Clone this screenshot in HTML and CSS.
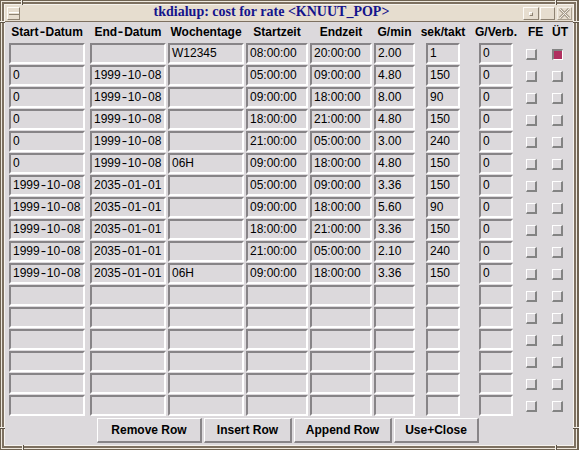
FILE: index.html
```html
<!DOCTYPE html>
<html>
<head>
<meta charset="utf-8">
<title>tkdialup</title>
<link rel="stylesheet" href="styles.css">
</head>
<body>
<div class="window">
  <div class="frame">
    <div class="inner">
      <div class="titlebar">
        <div class="tbtn menu"><span class="bar"></span></div>
        <div class="title">tkdialup: cost for rate &lt;KNUUT_POP&gt;</div>
        <div class="tbtn iconify"><span class="dot"></span></div>
        <div class="tbtn maximize"></div>
        <div class="tbtn close"><svg width="13" height="11" viewBox="0 0 13 11"><path d="M2 1 L11 10 M11 1 L2 10" stroke="#a89e8e" stroke-width="3" fill="none"/><path d="M2 1 L11 10 M11 1 L2 10" stroke="#f3efe8" stroke-width="1" fill="none"/></svg></div>
      </div>
      <div class="content">
        <div class="grid">
          <div class="h w76"><span>Start<span class="hy">-</span>Datum</span></div>
          <div class="h w76"><span>End<span class="hy">-</span>Datum</span></div>
          <div class="h w76"><span>Wochentage</span></div>
          <div class="h w62"><span>Startzeit</span></div>
          <div class="h w62"><span>Endzeit</span></div>
          <div class="h w41"><span>G/min</span></div>
          <div class="h w34"><span>sek/takt</span></div>
          <div class="h w34"><span>G/Verb.</span></div>
          <div class="h fe"><span>FE</span></div>
          <div class="h ut"><span>ÜT</span></div>

          <div class="e w76"></div><div class="e w76"></div><div class="e w76">W12345</div><div class="e w62">08:00:00</div><div class="e w62">20:00:00</div><div class="e w41">2.00</div><div class="e w34">1</div><div class="e w34">0</div><div class="cb"></div><div class="cb on"></div>

          <div class="e w76">0</div><div class="e w76">1999<span class="hy">-</span>10<span class="hy">-</span>08</div><div class="e w76"></div><div class="e w62">05:00:00</div><div class="e w62">09:00:00</div><div class="e w41">4.80</div><div class="e w34">150</div><div class="e w34">0</div><div class="cb"></div><div class="cb"></div>

          <div class="e w76">0</div><div class="e w76">1999<span class="hy">-</span>10<span class="hy">-</span>08</div><div class="e w76"></div><div class="e w62">09:00:00</div><div class="e w62">18:00:00</div><div class="e w41">8.00</div><div class="e w34">90</div><div class="e w34">0</div><div class="cb"></div><div class="cb"></div>

          <div class="e w76">0</div><div class="e w76">1999<span class="hy">-</span>10<span class="hy">-</span>08</div><div class="e w76"></div><div class="e w62">18:00:00</div><div class="e w62">21:00:00</div><div class="e w41">4.80</div><div class="e w34">150</div><div class="e w34">0</div><div class="cb"></div><div class="cb"></div>

          <div class="e w76">0</div><div class="e w76">1999<span class="hy">-</span>10<span class="hy">-</span>08</div><div class="e w76"></div><div class="e w62">21:00:00</div><div class="e w62">05:00:00</div><div class="e w41">3.00</div><div class="e w34">240</div><div class="e w34">0</div><div class="cb"></div><div class="cb"></div>

          <div class="e w76">0</div><div class="e w76">1999<span class="hy">-</span>10<span class="hy">-</span>08</div><div class="e w76">06H</div><div class="e w62">09:00:00</div><div class="e w62">18:00:00</div><div class="e w41">4.80</div><div class="e w34">150</div><div class="e w34">0</div><div class="cb"></div><div class="cb"></div>

          <div class="e w76">1999<span class="hy">-</span>10<span class="hy">-</span>08</div><div class="e w76">2035<span class="hy">-</span>01<span class="hy">-</span>01</div><div class="e w76"></div><div class="e w62">05:00:00</div><div class="e w62">09:00:00</div><div class="e w41">3.36</div><div class="e w34">150</div><div class="e w34">0</div><div class="cb"></div><div class="cb"></div>

          <div class="e w76">1999<span class="hy">-</span>10<span class="hy">-</span>08</div><div class="e w76">2035<span class="hy">-</span>01<span class="hy">-</span>01</div><div class="e w76"></div><div class="e w62">09:00:00</div><div class="e w62">18:00:00</div><div class="e w41">5.60</div><div class="e w34">90</div><div class="e w34">0</div><div class="cb"></div><div class="cb"></div>

          <div class="e w76">1999<span class="hy">-</span>10<span class="hy">-</span>08</div><div class="e w76">2035<span class="hy">-</span>01<span class="hy">-</span>01</div><div class="e w76"></div><div class="e w62">18:00:00</div><div class="e w62">21:00:00</div><div class="e w41">3.36</div><div class="e w34">150</div><div class="e w34">0</div><div class="cb"></div><div class="cb"></div>

          <div class="e w76">1999<span class="hy">-</span>10<span class="hy">-</span>08</div><div class="e w76">2035<span class="hy">-</span>01<span class="hy">-</span>01</div><div class="e w76"></div><div class="e w62">21:00:00</div><div class="e w62">05:00:00</div><div class="e w41">2.10</div><div class="e w34">240</div><div class="e w34">0</div><div class="cb"></div><div class="cb"></div>

          <div class="e w76">1999<span class="hy">-</span>10<span class="hy">-</span>08</div><div class="e w76">2035<span class="hy">-</span>01<span class="hy">-</span>01</div><div class="e w76">06H</div><div class="e w62">09:00:00</div><div class="e w62">18:00:00</div><div class="e w41">3.36</div><div class="e w34">150</div><div class="e w34">0</div><div class="cb"></div><div class="cb"></div>

          <div class="e w76"></div><div class="e w76"></div><div class="e w76"></div><div class="e w62"></div><div class="e w62"></div><div class="e w41"></div><div class="e w34"></div><div class="e w34"></div><div class="cb"></div><div class="cb"></div>
          <div class="e w76"></div><div class="e w76"></div><div class="e w76"></div><div class="e w62"></div><div class="e w62"></div><div class="e w41"></div><div class="e w34"></div><div class="e w34"></div><div class="cb"></div><div class="cb"></div>
          <div class="e w76"></div><div class="e w76"></div><div class="e w76"></div><div class="e w62"></div><div class="e w62"></div><div class="e w41"></div><div class="e w34"></div><div class="e w34"></div><div class="cb"></div><div class="cb"></div>
          <div class="e w76"></div><div class="e w76"></div><div class="e w76"></div><div class="e w62"></div><div class="e w62"></div><div class="e w41"></div><div class="e w34"></div><div class="e w34"></div><div class="cb"></div><div class="cb"></div>
          <div class="e w76"></div><div class="e w76"></div><div class="e w76"></div><div class="e w62"></div><div class="e w62"></div><div class="e w41"></div><div class="e w34"></div><div class="e w34"></div><div class="cb"></div><div class="cb"></div>
          <div class="e w76"></div><div class="e w76"></div><div class="e w76"></div><div class="e w62"></div><div class="e w62"></div><div class="e w41"></div><div class="e w34"></div><div class="e w34"></div><div class="cb"></div><div class="cb"></div>
        </div>
        <div class="buttons">
          <div class="btn b-remove">Remove Row</div>
          <div class="btn b-insert">Insert Row</div>
          <div class="btn b-append">Append Row</div>
          <div class="btn b-close">Use+Close</div>
        </div>
      </div>
    </div>
  </div>
  <span class="mark mv m1"></span>
  <span class="mark mh m2"></span>
  <span class="mark mv m3"></span>
  <span class="mark mh m4"></span>
  <span class="mark mh m5"></span>
  <span class="mark mv m6"></span>
  <span class="mark mh m7"></span>
  <span class="mark mv m8"></span>
</div>
</body>
</html>
```
FILE: styles.css
```css
* { box-sizing: border-box; }
html, body { margin: 0; padding: 0; }
body {
  width: 579px;
  height: 450px;
  overflow: hidden;
  font-family: "Liberation Sans", Arial, sans-serif;
  font-size: 12px;
  color: #000;
  background: #7d7060;
}
.window {
  position: relative;
  width: 579px;
  height: 450px;
  background: #7d7060;
  border: 1px solid #6f6352;
  border-right-width: 2px;
}
.frame {
  height: 100%;
  border: 1px solid #eee8dd;
  padding: 2px;
  background: #7d7060;
}
.inner {
  height: 100%;
  border: 1px solid #f6f3ee;
  background: #7d7060;
  display: flex;
  flex-direction: column;
}
.titlebar {
  flex: none;
  height: 16px;
  background: #e6ddcf;
  display: flex;
  align-items: flex-start;
}
.tbtn {
  flex: none;
  height: 13px;
  margin-top: 2px;
  border: 1px solid;
  border-color: #fdfbf7 #8d8272 #8d8272 #fdfbf7;
  background: #e6ddcf;
  display: flex;
  align-items: center;
  justify-content: center;
}
.menu { width: 13px; margin-left: 2px; }
.menu .bar {
  width: 10px;
  height: 3px;
  border-top: 1px solid #fff;
  border-bottom: 1px solid #8d8272;
  background: #e6ddcf;
}
.title {
  flex: 1;
  text-align: center;
  font-family: "Liberation Serif", "Times New Roman", serif;
  font-weight: bold;
  font-size: 14px;
  line-height: 14px;
  color: #14148c;
  white-space: nowrap;
}
.iconify { width: 16px; }
.iconify .dot {
  width: 4px;
  height: 4px;
  border: 1px solid;
  border-color: #fff #8d8272 #8d8272 #fff;
}
.maximize { width: 15px; margin-left: 1px; }
.close { width: 15px; margin-left: 2px; margin-right: 1px; border-color: #f3efe8 #a89e8e #a89e8e #f3efe8; }
.close svg { display: block; }

.content {
  flex: 1;
  margin-top: 1px;
  background: #dcd9dc;
  padding: 0 0 0 4px;
  display: flex;
  flex-direction: column;
}
.grid {
  display: grid;
  grid-template-columns: 81px 78px 78px 64px 64px 52px 53px 47px 26px 21px;
  grid-template-rows: 20px;
  grid-auto-rows: 21px;
  row-gap: 1px;
}
.h {
  font-weight: bold;
  white-space: nowrap;
  display: flex;
  justify-content: center;
  line-height: 19px;
  padding-top: 1px;
}
.h.fe { justify-content: flex-start; padding-left: 2px; }
.h.ut { justify-content: flex-start; }
.hy {
  display: inline-block;
  width: 7px;
  text-align: center;
  transform: scaleX(1.35);
}
.e {
  height: 21px;
  border: 2px solid;
  border-color: #878487 #fff #fff #878487;
  padding-left: 2px;
  line-height: 17px;
  white-space: nowrap;
  overflow: hidden;
}
.w76 { width: 76px; }
.w62 { width: 62px; }
.w41 { width: 41px; }
.w34 { width: 34px; }
.cb {
  width: 11px;
  height: 11px;
  margin-top: 6px;
  align-self: start;
  border-style: solid;
  border-width: 1px 2px 2px 1px;
  border-color: #fff #838383 #838383 #fff;
}
.cb.on {
  border-width: 2px 1px 1px 2px;
  border-color: #838383 #fff #fff #838383;
  background: #b03060;
}
.buttons {
  display: flex;
  gap: 2px;
  margin-top: 2px;
  padding-left: 88px;
}
.btn {
  height: 25px;
  border-style: solid;
  border-width: 1px 2px 2px 1px;
  border-color: #fff #878487 #878487 #fff;
  font-weight: bold;
  display: flex;
  align-items: center;
  justify-content: center;
  white-space: nowrap;
}
.b-remove { width: 105px; }
.b-insert { width: 88px; }
.b-append { width: 98px; }
.b-close { width: 85px; }

.mark { position: absolute; background: #f2eee6; }
.mv { width: 1px; height: 5px; box-shadow: 1px 0 0 #5c5244; }
.mh { width: 5px; height: 1px; box-shadow: 0 1px 0 #5c5244; }
.m1 { left: 20px; top: -1px; }
.m2 { left: -1px; top: 20px; }
.m3 { left: 554px; top: -1px; }
.m4 { left: 572px; top: 20px; width: 6px; }
.m5 { left: 572px; top: 426px; width: 6px; }
.m6 { left: 554px; top: 444px; }
.m7 { left: -1px; top: 426px; }
.m8 { left: 21px; top: 444px; }
```
